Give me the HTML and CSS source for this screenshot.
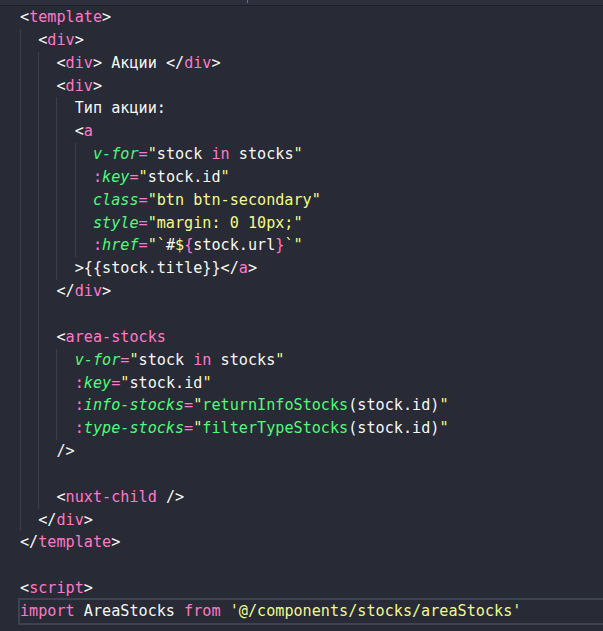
FILE: index.html
```html
<!DOCTYPE html>
<html lang="en">
<head>
    <meta charset="UTF-8">
    <title>stocks.vue</title>
    <link rel="stylesheet" href="styles.css">
</head>
<body>

    <div class="editor">
        <div class="topbar"><span class="marker"></span></div>

        <div class="code">
            <div class="line"><span class="p">&lt;</span><span class="t">template</span><span class="p">&gt;</span></div>
            <div class="line"><span class="ind"></span><span class="p">&lt;</span><span class="t">div</span><span class="p">&gt;</span></div>
            <div class="line"><span class="ind"></span><span class="ind"></span><span class="p">&lt;</span><span class="t">div</span><span class="p">&gt;</span> Акции <span class="p">&lt;/</span><span class="t">div</span><span class="p">&gt;</span></div>
            <div class="line"><span class="ind"></span><span class="ind"></span><span class="p">&lt;</span><span class="t">div</span><span class="p">&gt;</span></div>
            <div class="line"><span class="ind"></span><span class="ind"></span><span class="ind"></span>Тип акции:</div>
            <div class="line"><span class="ind"></span><span class="ind"></span><span class="ind"></span><span class="p">&lt;</span><span class="t">a</span></div>
            <div class="line"><span class="ind"></span><span class="ind"></span><span class="ind"></span><span class="ind"></span><span class="a">v-for</span><span class="t">=</span><span class="s">"</span>stock <span class="t">in</span> stocks<span class="s">"</span></div>
            <div class="line"><span class="ind"></span><span class="ind"></span><span class="ind"></span><span class="ind"></span><span class="t">:</span><span class="a">key</span><span class="t">=</span><span class="s">"</span>stock.id<span class="s">"</span></div>
            <div class="line"><span class="ind"></span><span class="ind"></span><span class="ind"></span><span class="ind"></span><span class="a">class</span><span class="t">=</span><span class="s">"btn btn-secondary"</span></div>
            <div class="line"><span class="ind"></span><span class="ind"></span><span class="ind"></span><span class="ind"></span><span class="a">style</span><span class="t">=</span><span class="s">"margin: 0 10px;"</span></div>
            <div class="line"><span class="ind"></span><span class="ind"></span><span class="ind"></span><span class="ind"></span><span class="t">:</span><span class="a">href</span><span class="t">=</span><span class="s">"`</span>#<span class="s">$</span><span class="t">{</span>stock.url<span class="t">}</span><span class="s">`"</span></div>
            <div class="line"><span class="ind"></span><span class="ind"></span><span class="ind"></span><span class="p">&gt;</span>{{stock.title}}<span class="p">&lt;/</span><span class="t">a</span><span class="p">&gt;</span></div>
            <div class="line"><span class="ind"></span><span class="ind"></span><span class="p">&lt;/</span><span class="t">div</span><span class="p">&gt;</span></div>
            <div class="line"><span class="ind"></span><span class="ind"></span></div>
            <div class="line"><span class="ind"></span><span class="ind"></span><span class="p">&lt;</span><span class="t">area-stocks</span></div>
            <div class="line"><span class="ind"></span><span class="ind"></span><span class="ind"></span><span class="a">v-for</span><span class="t">=</span><span class="s">"</span>stock <span class="t">in</span> stocks<span class="s">"</span></div>
            <div class="line"><span class="ind"></span><span class="ind"></span><span class="ind"></span><span class="t">:</span><span class="a">key</span><span class="t">=</span><span class="s">"</span>stock.id<span class="s">"</span></div>
            <div class="line"><span class="ind"></span><span class="ind"></span><span class="ind"></span><span class="t">:</span><span class="a">info-stocks</span><span class="t">=</span><span class="s">"</span><span class="f">returnInfoStocks</span>(stock.id)<span class="s">"</span></div>
            <div class="line"><span class="ind"></span><span class="ind"></span><span class="ind"></span><span class="t">:</span><span class="a">type-stocks</span><span class="t">=</span><span class="s">"</span><span class="f">filterTypeStocks</span>(stock.id)<span class="s">"</span></div>
            <div class="line"><span class="ind"></span><span class="ind"></span><span class="p">/&gt;</span></div>
            <div class="line"><span class="ind"></span><span class="ind"></span></div>
            <div class="line"><span class="ind"></span><span class="ind"></span><span class="p">&lt;</span><span class="t">nuxt-child</span> <span class="p">/&gt;</span></div>
            <div class="line"><span class="ind"></span><span class="p">&lt;/</span><span class="t">div</span><span class="p">&gt;</span></div>
            <div class="line"><span class="p">&lt;/</span><span class="t">template</span><span class="p">&gt;</span></div>
            <div class="line"></div>
            <div class="line"><span class="p">&lt;</span><span class="t">script</span><span class="p">&gt;</span></div>
            <div class="line current"><span class="t">import</span> AreaStocks <span class="t">from</span> <span class="s">'@/components/stocks/areaStocks'</span></div>
        </div>
    </div>

</body>
</html>
```

FILE: styles.css
```css
body {
    margin: 0;
    background-color: #282a36;
    overflow: hidden;
}

.editor {
    width: 603px;
    height: 631px;
    background-color: #282a36;
}

.topbar {
    position: relative;
    height: 5px;
    background-color: #2d2f3c;
    border-bottom: 1px solid #1e1f28;
}

.topbar .marker {
    position: absolute;
    left: 247px;
    top: 0;
    width: 1px;
    height: 3px;
    background-color: #6b6e80;
}

.code {
    padding-left: 20px;
    font-family: "DejaVu Sans Mono", "Liberation Mono", monospace;
    font-size: 15.15px;
    line-height: 22.85px;
    color: #f8f8f2;
}

.line {
    height: 22.85px;
    white-space: pre;
}

.line.current {
    outline: 2px solid #3f4254;
    outline-offset: 0;
}

/* indent guide: one per two spaces */
.ind {
    display: inline-block;
    width: 18.24px;
    height: 22.85px;
    vertical-align: top;
    box-sizing: border-box;
    border-left: 1px solid #3c3e4c;
}

.p { color: #f8f8f2; }
.t { color: #ff79c6; }
.a { color: #50fa7b; font-style: italic; }
.s { color: #f1fa8c; }
.f { color: #50fa7b; }
```
